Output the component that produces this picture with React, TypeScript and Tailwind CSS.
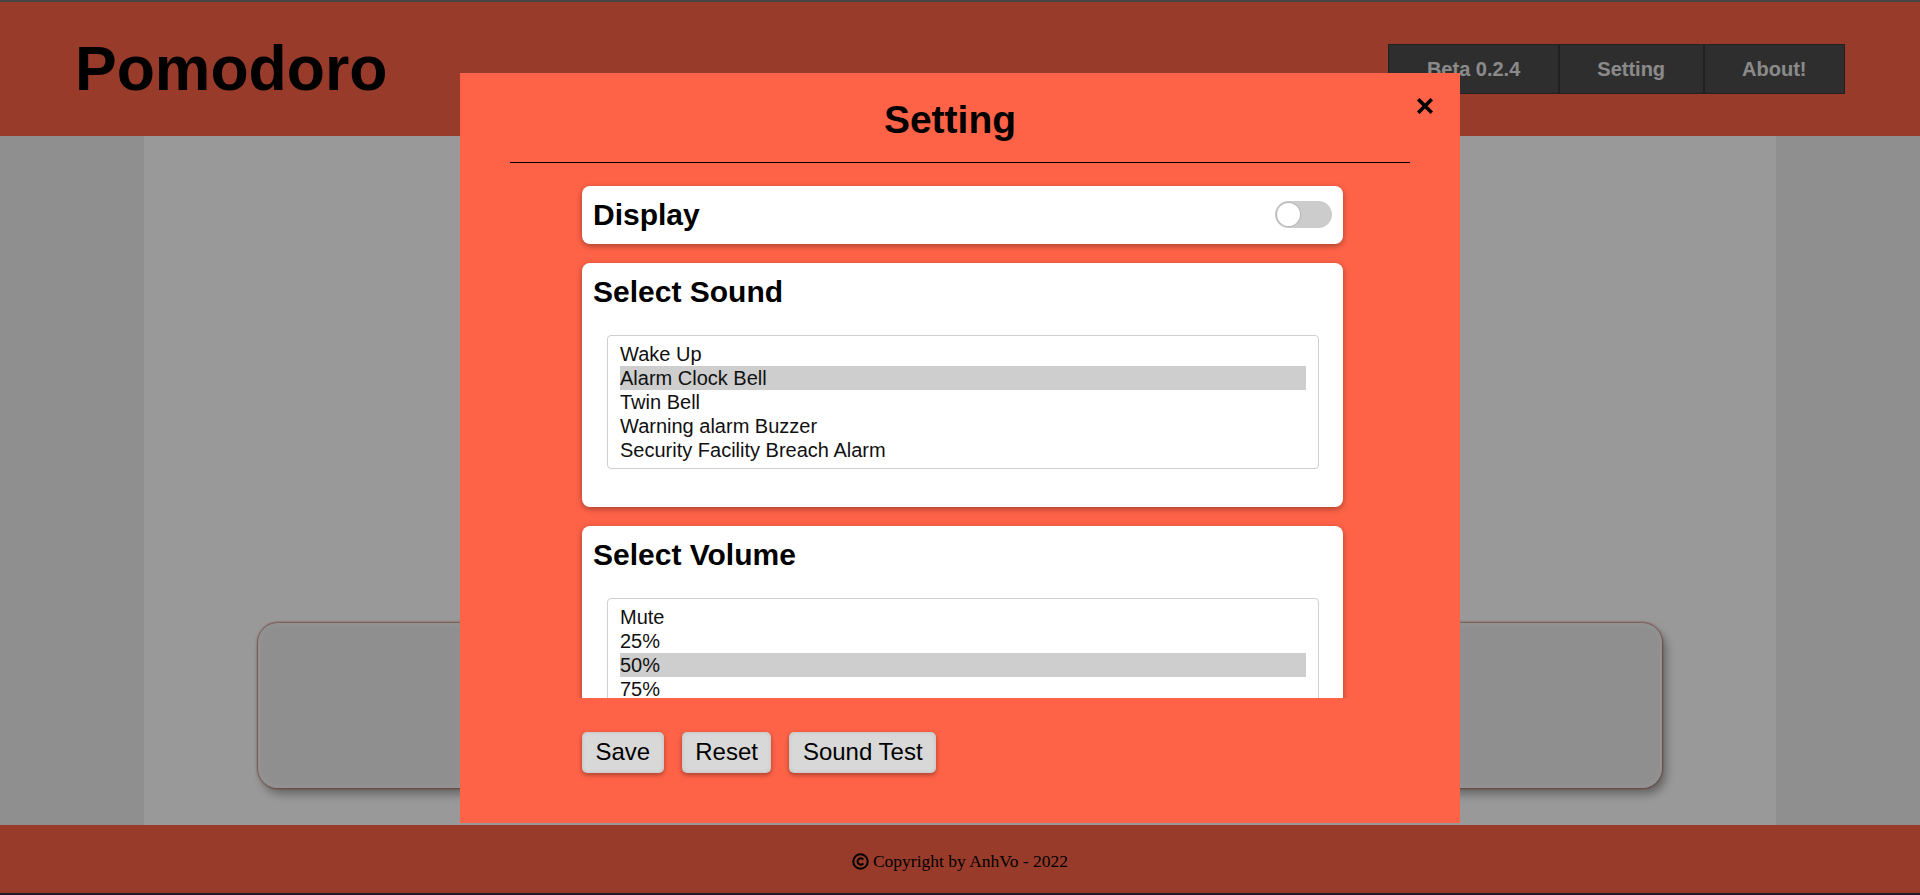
import React from "react";

const sounds = ["Wake Up", "Alarm Clock Bell", "Twin Bell", "Warning alarm Buzzer", "Security Facility Breach Alarm"];
const volumes = ["Mute", "25%", "50%", "75%", "100%"];

function ListBox({ items, selected }: { items: string[]; selected: number }) {
  return (
    <div className="mx-auto w-[712px] h-[134px] border border-[#cfcfcf] rounded-[4px] px-[12px] py-[6px] overflow-hidden bg-white">
      {items.map((item, i) => (
        <div
          key={item}
          className={`h-[24px] leading-[24px] text-[20px] text-[#111] whitespace-nowrap ${i === selected ? "bg-[#cecece]" : ""}`}
        >
          {item}
        </div>
      ))}
    </div>
  );
}

function SelectCard({ title, items, selected }: { title: string; items: string[]; selected: number }) {
  return (
    <div className="w-[761px] h-[244px] shrink-0 bg-white rounded-[8px] shadow-[0_2px_6px_rgba(0,0,0,0.35)] pt-[12px] pl-[11px] pr-[10px]">
      <h2 className="text-[30px] leading-[34px] font-bold text-black">{title}</h2>
      <div className="mt-[26px]">
        <ListBox items={items} selected={selected} />
      </div>
    </div>
  );
}

function SettingModal() {
  return (
    <div className="relative w-[1000px] h-[750px] bg-[#ff6347] pt-[24px]">
      <h1 className="text-center text-[39px] leading-[45px] font-bold text-black pr-[20px]">Setting</h1>
      <button className="absolute left-[957px] top-[25px] w-[16px] h-[16px]">
        <svg viewBox="0 0 16 16" width="16" height="16">
          <path d="M2.5 2.5 L13.5 13.5 M13.5 2.5 L2.5 13.5" stroke="#000" strokeWidth="3.6" strokeLinecap="square" />
        </svg>
      </button>
      <div className="mx-[50px] mt-[20px] h-px bg-black" />

      {/* scroll area, cards run below the fold */}
      <div className="mt-[8px] h-[527px] overflow-hidden pt-[15px] pl-[122px]">
        <div className="flex flex-col gap-[19px] pb-6">
          <div className="w-[761px] h-[58px] shrink-0 bg-white rounded-[8px] shadow-[0_2px_6px_rgba(0,0,0,0.35)] flex items-center justify-between pl-[11px] pr-[11px]">
            <span className="text-[30px] leading-[34px] font-bold text-black">Display</span>
            <div className="w-[57px] h-[27px] rounded-full bg-[#cccccc] p-[2px]">
              <div className="w-[23px] h-[23px] rounded-full bg-white shadow-[0_0_1px_1px_rgba(0,0,0,0.12)]" />
            </div>
          </div>
          <SelectCard title="Select Sound" items={sounds} selected={1} />
          <SelectCard title="Select Volume" items={volumes} selected={2} />
        </div>
      </div>

      <div className="mt-[34px] pl-[122px] flex gap-[18px]">
        {["Save", "Reset", "Sound Test"].map((label) => (
          <button
            key={label}
            className="h-[41px] px-[13.5px] rounded-[5px] bg-[#d8d8d8] text-[24px] text-black shadow-[0_2px_5px_rgba(0,0,0,0.35),inset_0_0_4px_rgba(0,0,0,0.12)]"
          >
            {label}
          </button>
        ))}
      </div>
    </div>
  );
}

export default function App() {
  return (
    <div className="h-screen flex flex-col font-['Liberation_Sans',Arial,sans-serif] overflow-hidden">
      <header className="h-[136px] shrink-0 border-t-2 border-[#767676] bg-[#ff6347] flex items-center justify-between pl-[75px] pr-[75px]">
        <div className="text-[62.5px] font-bold text-black">Pomodoro</div>
        <nav className="flex">
          {["Beta 0.2.4", "Setting", "About!"].map((item) => (
            <button
              key={item}
              className="h-[50px] px-[37.5px] border border-[#383838] bg-[#4d4d4d] text-[20px] font-bold text-[#e6e6e6]"
            >
              {item}
            </button>
          ))}
        </nav>
      </header>

      <main className="flex-1 bg-[#eeeeee]">
        <div className="w-[85%] h-full mx-auto bg-white flex flex-col items-center pt-[487px]">
          <div className="w-[1404px] h-[165px] rounded-[20px] bg-[#eeeeee] shadow-[0_0_2px_1px_rgba(180,90,75,0.75),4px_6px_10px_rgba(0,0,0,0.35),inset_0_0_10px_rgba(255,255,255,0.8)]" />
        </div>
      </main>

      <footer className="h-[70px] shrink-0 border-b-2 border-[#333] bg-[#ff6347] flex items-center justify-center pt-[4px] font-['Liberation_Serif',serif] text-[17.5px] text-black">
        <svg viewBox="0 0 16 16" width="17" height="17" className="mr-[4px]">
          <circle cx="8" cy="8" r="6.8" fill="none" stroke="#000" strokeWidth="1.9" />
          <path d="M10.6 6.2 A3 3 0 1 0 10.6 9.8" fill="none" stroke="#000" strokeWidth="1.9" />
        </svg>
        <span>Copyright by AnhVo - 2022</span>
      </footer>

      <div className="fixed inset-0 bg-black/40 flex items-center justify-center">
        <SettingModal />
      </div>
    </div>
  );
}
